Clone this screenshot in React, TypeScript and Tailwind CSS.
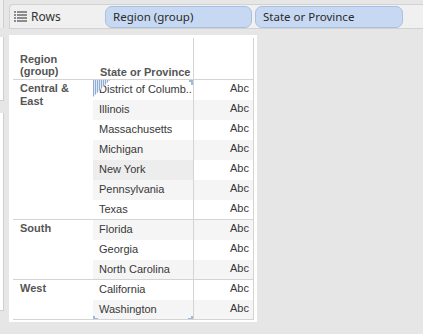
import React from "react";

type Row = { name: string; hl?: boolean };
const groups: { label: string[]; h: string; rows: Row[] }[] = [
  {
    label: ["Central &", "East"],
    h: "h-[140px]",
    rows: [
      { name: "District of Columb.." },
      { name: "Illinois" },
      { name: "Massachusetts" },
      { name: "Michigan" },
      { name: "New York", hl: true },
      { name: "Pennsylvania" },
      { name: "Texas" },
    ],
  },
  {
    label: ["South"],
    h: "h-[60px]",
    rows: [{ name: "Florida" }, { name: "Georgia" }, { name: "North Carolina" }],
  },
  {
    label: ["West"],
    h: "h-[40px]",
    rows: [{ name: "California" }, { name: "Washington" }],
  },
];

function RowsIcon() {
  return (
    <svg width="13" height="11" viewBox="0 0 13 11" className="shrink-0">
      {[0, 3, 6, 9].map((y) => (
        <g key={y} fill="#8c8c8c">
          <rect x="0" y={y} width="2" height="2" />
          <rect x="3" y={y} width="10" height="2" />
        </g>
      ))}
    </svg>
  );
}

function Hatch() {
  return (
    <svg width="17" height="17" viewBox="0 0 17 17" className="absolute left-0 top-0 z-10">
      <defs>
        <clipPath id="tri">
          <polygon points="0,0 17,0 0,17" />
        </clipPath>
      </defs>
      <g clipPath="url(#tri)">
        <rect x="0" y="0" width="17" height="17" fill="#dfe8f4" />
        {[0, 2, 4, 6, 8, 10, 12, 14, 16].map((x) => (
          <rect key={x} x={x} y="0" width="1" height="17" fill="#8fadd4" />
        ))}
      </g>
    </svg>
  );
}

export default function App() {
  let idx = 0;
  return (
    <div
      className="w-[423px] h-[334px] bg-[#e6e6e6] overflow-hidden flex"
      style={{ fontFamily: '"Liberation Sans", Arial, sans-serif' }}
    >
      {/* left slivers */}
      <div className="w-[4px] flex flex-col shrink-0">
        <div className="h-[28px] bg-[#efefef] border-r border-[#cfcfcf]" />
        <div className="h-[9px]" />
        <div className="h-[64px] bg-white border-r border-b border-[#cfcfcf]" />
        <div className="h-[12px]" />
        <div className="h-[198px] bg-white border-r border-b border-[#cfcfcf]" />
      </div>
      <div className="w-[5px] shrink-0" />
      <div className="flex-1 flex flex-col">
        {/* shelf */}
        <div className="mt-[4px] h-[25px] flex items-center bg-[#f0f0f0] border-t border-l border-b border-[#d2d2d2] rounded-tl-[4px]">
          <div className="w-[95px] flex items-center pl-[4px] gap-[4px] h-full">
            <RowsIcon />
            <span
              className="text-[12px] text-[#333]"
              style={{ fontFamily: '"Noto Sans", sans-serif' }}
            >
              Rows
            </span>
          </div>
          <div
            className="w-[147px] h-[22px] rounded-[7px] bg-[#c7d9f2] border border-[#a9c0e0] flex items-center pl-[7px] text-[11.5px] text-[#2a2a2a]"
            style={{ fontFamily: '"Noto Sans", sans-serif' }}
          >
            Region (group)
          </div>
          <div
            className="ml-[3px] w-[148px] h-[22px] rounded-[7px] bg-[#c7d9f2] border border-[#a9c0e0] flex items-center pl-[7px] text-[11.5px] text-[#2a2a2a]"
            style={{ fontFamily: '"Noto Sans", sans-serif' }}
          >
            State or Province
          </div>
        </div>

        {/* view */}
        <div className="mt-[6px] w-[248px] h-[287px] bg-white pl-[4px] pt-[3px] flex flex-col">
          {/* header */}
          <div className="flex h-[42px] border-b border-[#d4d4d4] w-[241px] shrink-0">
            <div className="w-[80px] flex flex-col justify-end pl-[7px] pb-[1px] text-[11px] font-bold text-[#555] leading-[12px]">
              <span>Region</span>
              <span className="mb-[1px]">(group)</span>
            </div>
            <div className="w-[101px] border-r border-[#d4d4d4] flex items-end pl-[7px] pb-[1px] text-[11px] font-bold text-[#555] leading-[12px]">
              State or Province
            </div>
            <div className="w-[60px] border-r border-[#d4d4d4]" />
          </div>

          {groups.map((g, gi) => (
            <div
              key={gi}
              className={`flex ${g.h} border-b border-[#d4d4d4] w-[241px] shrink-0 overflow-hidden`}
            >
              <div className="w-[80px] pl-[7px] pt-[2px] text-[11px] font-bold text-[#555] leading-[13px] flex flex-col">
                {g.label.map((l) => (
                  <span key={l}>{l}</span>
                ))}
              </div>
              <div className="flex flex-col">
                {g.rows.map((r) => {
                  const i = idx++;
                  const odd = i % 2 === 1;
                  const stateBg = r.hl ? "bg-[#ededed]" : odd ? "bg-[#f5f5f5]" : "bg-white";
                  const abcBg = odd ? "bg-[#f5f5f5]" : "bg-white";
                  return (
                    <div key={r.name} className="flex h-[20px] shrink-0">
                      <div
                        className={`relative w-[101px] border-r border-[#d4d4d4] pl-[6px] pb-[2px] flex items-center text-[11px] text-[#383838] whitespace-nowrap ${stateBg}`}
                      >
                        {i === 0 && <Hatch />}
                        {i === 0 && (
                          <div className="absolute right-0 top-0 w-[4px] h-[5px] border-t-2 border-r-2 border-[#9fb9da]" />
                        )}
                        {i === 11 && (
                          <>
                            <div className="absolute left-0 bottom-0 w-[5px] h-[4px] border-b-2 border-l-2 border-[#9fb9da]" />
                            <div className="absolute right-0 bottom-0 w-[5px] h-[4px] border-b-2 border-r-2 border-[#9fb9da]" />
                          </>
                        )}
                        <span>{r.name}</span>
                      </div>
                      <div
                        className={`w-[60px] border-r border-[#d4d4d4] flex items-center justify-end pr-[4px] pb-[4px] text-[11px] text-[#383838] ${abcBg}`}
                      >
                        Abc
                      </div>
                    </div>
                  );
                })}
              </div>
            </div>
          ))}
        </div>
      </div>
    </div>
  );
}
